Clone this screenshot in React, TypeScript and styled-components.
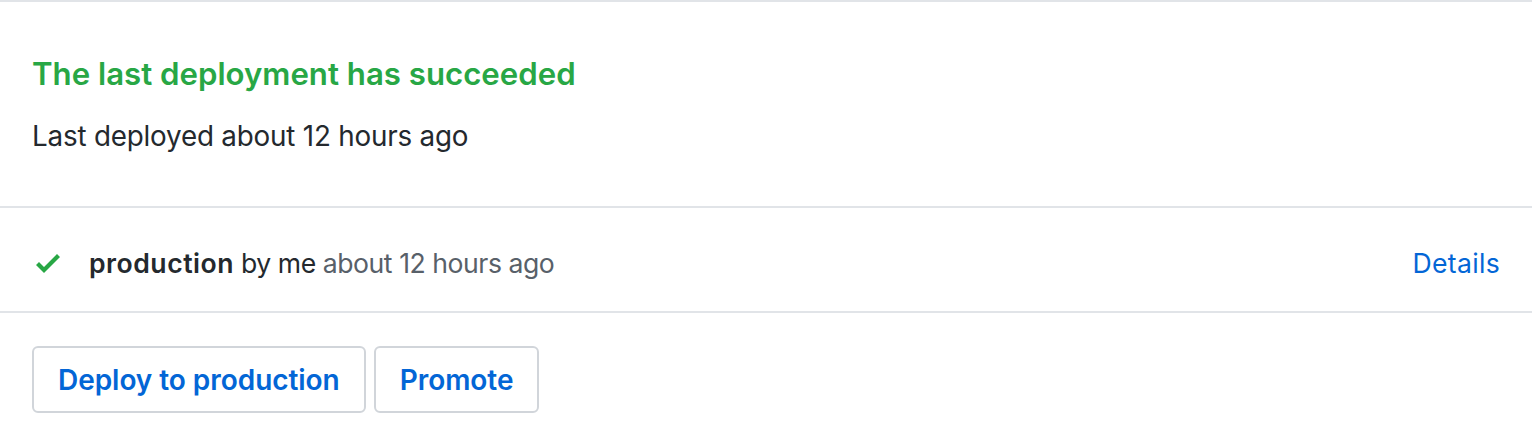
import React from "react";
import styled, { createGlobalStyle } from "styled-components";

const Global = createGlobalStyle`
  html, body { margin: 0; padding: 0; background: #ffffff; }
  body { font-family: Inter, "Noto Sans", "Liberation Sans", sans-serif; color: #24292e; }
`;

const Card = styled.div`
  width: 1532px;
  border-top: 2px solid #e1e4e8;
  background: #fff;
`;

const Summary = styled.div`
  padding: 52px 32px 50px;
  border-bottom: 2px solid #e1e4e8;
`;

const Title = styled.div`
  color: #28a745;
  font-size: 31.2px;
  font-weight: 600;
  line-height: 40px;
`;

const Subtitle = styled.div`
  margin-top: 22px;
  font-size: 27.8px;
  line-height: 40px;
  color: #24292e;
  letter-spacing: -0.2px;
`;

const Row = styled.div`
  display: flex;
  align-items: center;
  height: 105px;
  box-sizing: border-box;
  padding: 6px 32px 0 36px;
  border-bottom: 2px solid #e1e4e8;
  font-size: 26.6px;
  letter-spacing: -0.45px;
`;

const Icon = styled.svg`
  width: 24px;
  height: 32px;
  fill: #28a745;
  flex: none;
  margin-right: 29px;
`;

const Env = styled.span`
  font-weight: 600;
  color: #24292e;
  letter-spacing: 0.5px;
`;

const Who = styled.span`
  color: #24292e;
`;

const When = styled.span`
  color: #586069;
`;

const Info = styled.div`
  flex: 1;
  white-space: nowrap;
`;

const Link = styled.a`
  color: #0366d6;
  text-decoration: none;
  letter-spacing: 0.3px;
`;

const Actions = styled.div`
  display: flex;
  gap: 8px;
  padding: 33px 32px 34px;
`;

const Button = styled.button`
  height: 67px;
  padding: 0 24px;
  border: 2px solid #d1d5da;
  border-radius: 6px;
  background: #fff;
  color: #0366d6;
  font-family: inherit;
  font-size: 28px;
  font-weight: 600;
  letter-spacing: -0.05px;
  cursor: pointer;
`;

export default function App() {
  return (
    <>
      <Global />
      <Card>
        <Summary>
          <Title>The last deployment has succeeded</Title>
          <Subtitle>Last deployed about 12 hours ago</Subtitle>
        </Summary>
        <Row>
          <Icon viewBox="0 0 12 16" aria-hidden="true">
            <path d="M12 5l-8 8-4-4 1.5-1.5L4 10l6.5-6.5L12 5z" />
          </Icon>
          <Info>
            <Env>production</Env> <Who>by me</Who> <When>about 12 hours ago</When>
          </Info>
          <Link href="#">Details</Link>
        </Row>
        <Actions>
          <Button>Deploy to production</Button>
          <Button>Promote</Button>
        </Actions>
      </Card>
    </>
  );
}
